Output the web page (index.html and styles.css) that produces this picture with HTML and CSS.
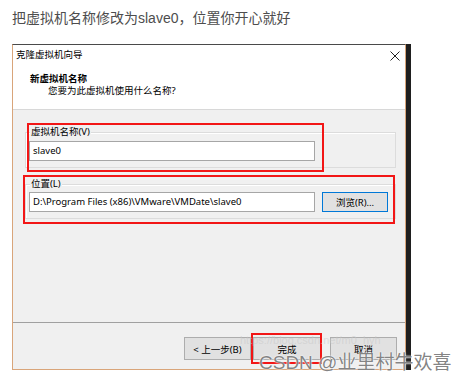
FILE: index.html
```html
<!DOCTYPE html>
<html lang="zh-CN">
<head>
<meta charset="utf-8">
<link rel="stylesheet" href="styles.css">
</head>
<body>
<p class="heading">把虚拟机名称修改为slave0，位置你开心就好</p>
<div class="dialog">
  <div class="titlebar">
    <span class="title">克隆虚拟机向导</span>
    <svg class="close" width="10" height="10" viewBox="0 0 10 10"><path d="M0.5 0.5 L9.5 9.5 M9.5 0.5 L0.5 9.5" stroke="#222" stroke-width="1" fill="none"/></svg>
  </div>
  <div class="header">
    <div class="h-title">新虚拟机名称</div>
    <div class="h-sub">您要为此虚拟机使用什么名称?</div>
  </div>
  <div class="body">
    <div class="group g1">
      <span class="legend">虚拟机名称(V)</span>
      <div class="row">
        <div class="input">slave0</div>
      </div>
    </div>
    <div class="group g2">
      <span class="legend">位置(L)</span>
      <div class="row">
        <div class="input">D:\Program Files (x86)\VMware\VMDate\slave0</div>
        <div class="btn browse">浏览(R)...</div>
      </div>
    </div>
  </div>
  <div class="footer">
    <div class="btn fbtn back">&lt; 上一步(B)</div>
    <div class="btn fbtn finish">完成</div>
    <div class="btn fbtn cancel">取消</div>
  </div>
  <div class="mark m1"></div>
  <div class="mark m2"></div>
  <div class="mark m3"></div>
</div>
<div class="url">https://blog.csdn.net/m0_hyh</div>
<div class="watermark">CSDN @业里村牛欢喜</div>
</body>
</html>
```
FILE: styles.css
```css
html, body {
  margin: 0;
  padding: 0;
  background: #ffffff;
}
body {
  width: 466px;
  height: 384px;
  position: relative;
  overflow: hidden;
  font-family: "Noto Sans", "Noto Sans CJK SC", sans-serif;
}
.heading {
  margin: 0 0 16px 0;
  padding: 8px 12px 0;
  font-family: "Liberation Sans", "Noto Sans CJK SC", sans-serif;
  font-size: 14px;
  line-height: 20px;
  color: #4d4d4d;
}
.dialog {
  position: relative;
  margin-left: 12px;
  width: 392px;
  height: 324px;
  border: 1px solid #d9a57a;
  border-top-color: #4a4a4a;
  box-shadow: 5px 0 0 #1f1f1f;
  background: #f0f0f0;
  display: flex;
  flex-direction: column;
  font-size: 9.5px;
  color: #000;
}
.titlebar {
  height: 20px;
  background: #fff;
  display: flex;
  align-items: center;
  justify-content: space-between;
  padding: 0 5px 0 3px;
}
.title {
  font-size: 9.5px;
  line-height: 12px;
  color: #000;
}
.close {
  display: block;
  margin-top: 1px;
}
.header {
  height: 36px;
  background: #fff;
  padding: 8px 0 0 17px;
  border-bottom: 1px solid #d8d8d8;
  line-height: 12px;
}
.h-title {
  font-weight: bold;
}
.h-sub {
  padding-left: 18px;
}
.body {
  height: 212px;
  border-bottom: 1px solid #a0a0a0;
  padding: 22px 9px 0 12px;
  box-sizing: border-box;
  height: 213px;
}
.group {
  position: relative;
  border: 1px solid #dcdcdc;
  box-shadow: inset 1px 1px 0 #fff;
  padding: 8px 0 6px 3px;
}
.g2 {
  margin-top: 16px;
  padding-top: 7px;
}
.legend {
  position: absolute;
  top: -7px;
  left: 4px;
  line-height: 12px;
  padding: 0 1px;
  background: #f0f0f0;
}
.row {
  display: flex;
  align-items: center;
}
.input {
  width: 286px;
  height: 20px;
  box-sizing: border-box;
  border: 1px solid #a6a6a6;
  background: #fff;
  padding-left: 3px;
  line-height: 18px;
  white-space: nowrap;
  overflow: hidden;
}
.btn {
  box-sizing: border-box;
  border: 1px solid #adadad;
  background: #e1e1e1;
  display: flex;
  align-items: center;
  justify-content: center;
  white-space: nowrap;
}
.browse {
  margin-left: 7px;
  width: 66px;
  height: 20px;
  border-color: #0078d7;
}
.footer {
  flex: 1;
  display: flex;
  justify-content: flex-end;
  align-items: flex-start;
  padding: 14px 8px 0 0;
}
.fbtn {
  height: 23px;
  width: 67px;
}
.finish {
  margin-left: 2px;
  width: 68px;
}
.cancel {
  margin-left: 9px;
}
.mark {
  position: absolute;
  border: 2px solid #f21616;
  box-sizing: border-box;
}
.m1 { left: 14px; top: 78px; width: 297px; height: 49px; }
.m2 { left: 10px; top: 130px; width: 372px; height: 49px; }
.m3 { left: 238px; top: 288px; width: 71px; height: 31px; }
.url {
  position: absolute;
  left: 240px;
  top: 334px;
  font-size: 11px;
  color: rgba(200, 200, 200, 0.55);
  font-family: "Liberation Sans", sans-serif;
}
.watermark {
  position: absolute;
  left: 259px;
  top: 351px;
  font-size: 19px;
  line-height: 24px;
  font-family: "Liberation Sans", "Noto Sans CJK SC", sans-serif;
  color: rgba(110, 110, 110, 0.85);
  text-shadow: 0 0 2px #fff, 0 0 1px #fff;
}
```
